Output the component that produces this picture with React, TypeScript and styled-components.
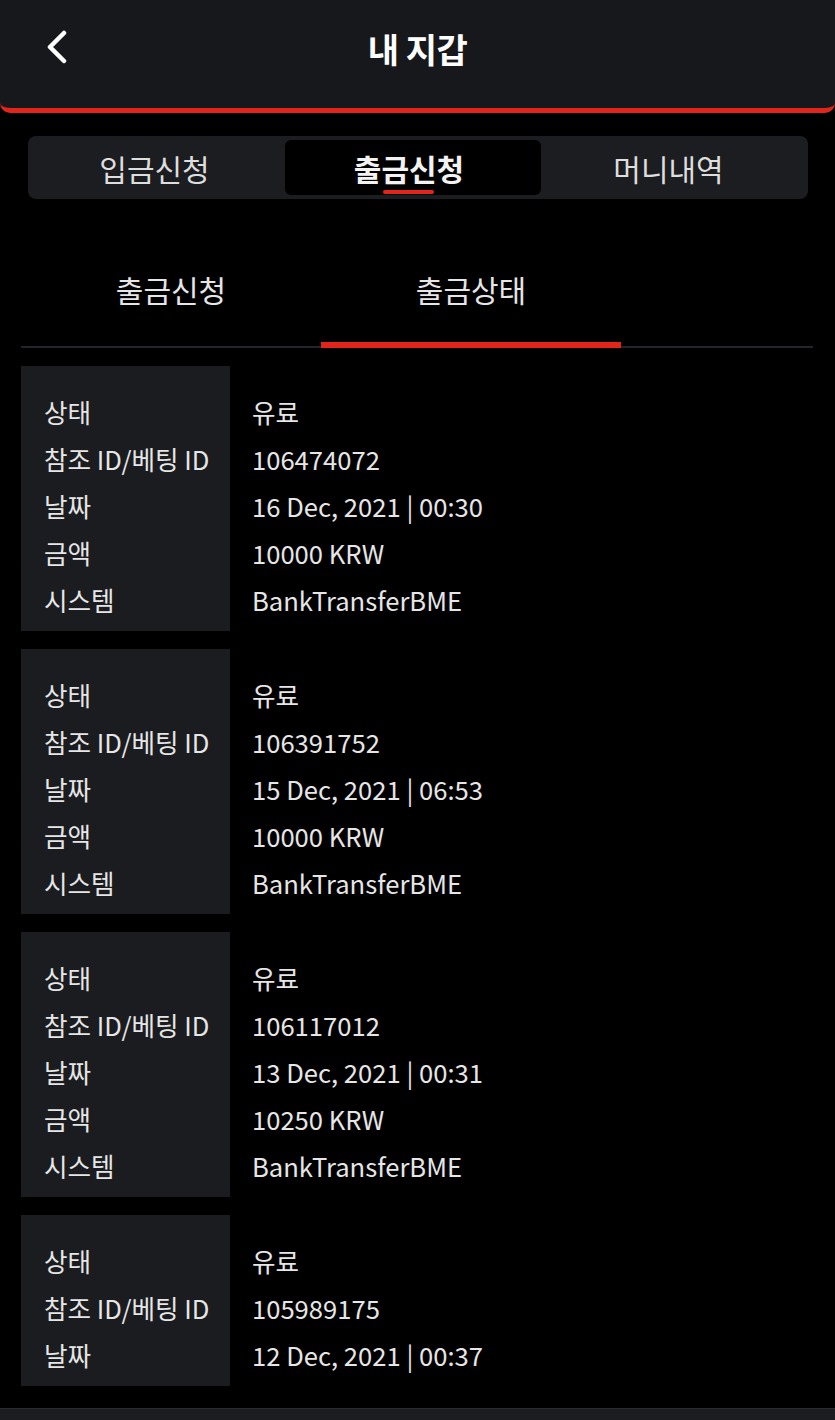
import React from 'react'
import styled, { createGlobalStyle } from 'styled-components'

const GlobalStyle = createGlobalStyle`
  body {
    margin: 0;
    background: #000;
    font-family: 'Noto Sans CJK KR', 'Noto Sans', sans-serif;
    color: #e6e6e6;
  }
`

interface Irecord {
  id: string
  date: string
  amount?: string
  system?: string
}

const records: Irecord[] = [
  { id: '106474072', date: '16 Dec, 2021 | 00:30', amount: '10000 KRW', system: 'BankTransferBME' },
  { id: '106391752', date: '15 Dec, 2021 | 06:53', amount: '10000 KRW', system: 'BankTransferBME' },
  { id: '106117012', date: '13 Dec, 2021 | 00:31', amount: '10250 KRW', system: 'BankTransferBME' },
  { id: '105989175', date: '12 Dec, 2021 | 00:37' },
]

const App = (): React.ReactElement => {
  return (
    <>
      <GlobalStyle />
      <Page>
        <Header>
          <BackButton aria-label="back">
            <svg width="26" height="34" viewBox="0 0 26 34" fill="none">
              <path d="M19 3 L5 17 L19 31" stroke="#fff" strokeWidth="4.5" strokeLinecap="round" strokeLinejoin="round" />
            </svg>
          </BackButton>
          <Title>내 지갑</Title>
          <span />
        </Header>

        <Segment>
          <SegmentItem>입금신청</SegmentItem>
          <SegmentItem active>출금신청</SegmentItem>
          <SegmentItem>머니내역</SegmentItem>
        </Segment>

        <SubTabs>
          <SubTab>출금신청</SubTab>
          <SubTab active>출금상태</SubTab>
        </SubTabs>

        <List>
          {records.map((r) => {
            const rows: [string, string][] = [
              ['상태', '유료'],
              ['참조 ID/베팅 ID', r.id],
              ['날짜', r.date],
            ]
            if (r.amount) rows.push(['금액', r.amount])
            if (r.system) rows.push(['시스템', r.system])
            return (
              <Card key={r.id}>
                <Labels>
                  {rows.map(([l]) => (
                    <Line key={l}>{l}</Line>
                  ))}
                </Labels>
                <Values>
                  {rows.map(([l, v]) => (
                    <Line key={l}>{v}</Line>
                  ))}
                </Values>
              </Card>
            )
          })}
        </List>
        <BottomBar />
      </Page>
    </>
  )
}

const Page = styled.div`
  min-height: 1420px;
  background: #000;
`
const Header = styled.header`
  height: 108px;
  background: #17181c;
  border-bottom: 5px solid #e1251b;
  border-radius: 0 0 10px 10px;
  display: grid;
  grid-template-columns: 1fr auto 1fr;
  align-items: center;
  padding: 0 0 0 45px;
  box-sizing: content-box;
  margin-top: -8px;
  padding-top: 8px;
`
const BackButton = styled.button`
  background: none;
  border: 0;
  padding: 0;
  width: 30px;
  height: 34px;
  display: flex;
  align-items: center;
  justify-self: start;
  margin-top: -14px;
  cursor: pointer;
`
const Title = styled.h1`
  margin: -12px 0 0 -45px;
  font-size: 34px;
  font-weight: 700;
  color: #fff;
  letter-spacing: -0.5px;
`
const Segment = styled.nav`
  margin: 23px 27px 0 28px;
  padding: 4px;
  height: 55px;
  background: #1c1d21;
  border-radius: 8px;
  display: grid;
  grid-template-columns: 253px 256px 1fr;
`
const SegmentItem = styled.div<{ active?: boolean }>`
  position: relative;
  display: flex;
  align-items: center;
  justify-content: center;
  padding-right: 8px;
  border-radius: 6px;
  font-size: 30px;
  font-weight: ${(p) => (p.active ? 700 : 400)};
  color: ${(p) => (p.active ? '#f2f2f2' : '#dedede')};
  background: ${(p) => (p.active ? '#000' : 'transparent')};
  &::after {
    content: '';
    display: ${(p) => (p.active ? 'block' : 'none')};
    position: absolute;
    bottom: 1px;
    left: 50%;
    width: 51px;
    height: 4px;
    margin-left: -30px;
    border-radius: 2px;
    background: #e1251b;
  }
`
const SubTabs = styled.div`
  margin: 36px 22px 0 21px;
  display: flex;
  border-bottom: 2px solid #24252a;
`
const SubTab = styled.div<{ active?: boolean }>`
  width: 300px;
  height: 107px;
  display: flex;
  align-items: center;
  justify-content: center;
  font-size: 30px;
  color: #e6e6e6;
  border-bottom: 6px solid ${(p) => (p.active ? '#e1251b' : 'transparent')};
  margin-bottom: -2px;
  box-sizing: content-box;
`
const List = styled.div`
  padding: 18px 22px 22px 21px;
  display: flex;
  flex-direction: column;
  gap: 18px;
`
const Card = styled.div`
  display: grid;
  grid-template-columns: 209px 1fr;
`
const Labels = styled.div`
  background: #1b1c20;
  padding: 22px 0 8px 23px;
`
const Values = styled.div`
  padding: 22px 0 8px 22px;
`
const Line = styled.div`
  height: 47px;
  line-height: 47px;
  font-size: 25.6px;
  color: #e6e6e6;
  white-space: nowrap;
`
const BottomBar = styled.div`
  height: 60px;
  background: #1c1d21;
  border-top: 1px solid #2a2b30;
`

export default App
